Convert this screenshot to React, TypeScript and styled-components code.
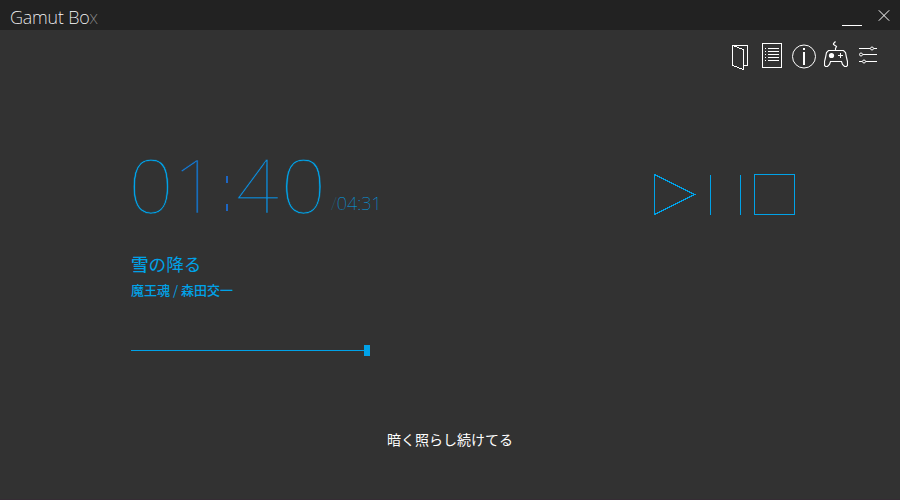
import React from "react";
import styled, { createGlobalStyle } from "styled-components";

const accent = "#00a2e8";

const Global = createGlobalStyle`
  * { box-sizing: border-box; }
  body { margin: 0; background: #323232; overflow: hidden; }
`;
const Window = styled.main`
  width: 900px;
  height: 500px;
  display: flex;
  flex-direction: column;
  background: #323232;
  border-bottom: 1px solid #352c34;
  font-family: "Noto Sans", "Noto Sans CJK JP", sans-serif;
  overflow: hidden;
`;
const TitleBar = styled.header`
  height: 30px;
  flex: none;
  display: flex;
  justify-content: space-between;
  background: #222;
`;
const Title = styled.h1`
  margin: 0;
  padding: 4px 0 0 10px;
  font: 200 18px/26px "Noto Sans", sans-serif;
  letter-spacing: -0.15px;
  color: #fff;
`;
const Faded = styled.span<{ $tone: string }>`
  color: ${(p) => p.$tone};
`;
const WindowButtons = styled.div`
  display: flex;
  gap: 15px;
  padding-right: 10px;
  color: #fff;
`;
const Button = styled.button`
  display: block;
  border: 0;
  padding: 0;
  background: none;
  color: inherit;
`;
const Toolbar = styled.nav`
  height: 32px;
  margin-top: 10px;
  flex: none;
  display: flex;
  justify-content: flex-end;
  gap: 8px;
  padding-right: 20px;
  color: #fff;
`;
const Drawing = styled.svg`
  display: block;
  fill: none;
  stroke: currentColor;
  shape-rendering: crispEdges;
`;
const Player = styled.section`
  height: 170px;
  flex: none;
  display: flex;
  justify-content: space-between;
  padding: 70px 104px 0 128px;
  color: ${accent};
`;
const Times = styled.div`
  display: flex;
`;
const Elapsed = styled.div`
  display: flex;
  font: 100 75px/90px "Noto Sans", sans-serif;
  -webkit-text-stroke: 0.6px #323232;
`;
const Digit = styled.span<{ $width: number; $stretch?: number; $tone?: string }>`
  width: ${(p) => p.$width}px;
  display: flex;
  justify-content: center;
  color: ${(p) => p.$tone ?? "inherit"};
  transform: translateY(-3px) scaleX(${(p) => p.$stretch ?? 1.06});
`;
const Colon = styled.span`
  width: 16px;
  display: flex;
  justify-content: center;
  color: transparent;
  -webkit-text-stroke: 0;
  background:
    linear-gradient(#1c66c4, #1c66c4) 9px 34px / 2px 7px no-repeat,
    linear-gradient(#1c66c4, #1c66c4) 9px 62px / 2px 7px no-repeat;
`;
const Total = styled.div`
  padding-top: 49px;
  margin-left: 6px;
  font: 100 18px/24px "Noto Sans", sans-serif;
`;
const Controls = styled.div`
  display: flex;
  align-items: flex-start;
  padding-top: 32px;
`;
const Track = styled.section`
  height: 93px;
  flex: none;
  padding: 7px 0 0 131px;
  color: ${accent};
`;
const Song = styled.h2`
  margin: 0;
  font: 400 17.6px/30px "Noto Sans CJK JP", sans-serif;
`;
const Artist = styled.p`
  margin: 0;
  font: 400 13px/22px "Noto Sans CJK JP", sans-serif;
`;
const Heavy = styled.span`
  font-weight: 500;
`;
const Seek = styled.div`
  width: 239px;
  height: 11px;
  margin: 10px 0 0 131px;
  flex: none;
  display: flex;
  align-items: center;
`;
const Line = styled.div`
  height: 1px;
  flex: 1;
  background: ${accent};
`;
const Thumb = styled.div`
  width: 6px;
  height: 11px;
  background: ${accent};
`;
const Lyric = styled.p`
  margin: 72px 0 0;
  text-align: center;
  color: #fff;
  font: 400 14px/22px "Noto Sans CJK JP", sans-serif;
`;

function Icon({ w, h, children }: { w: number; h: number; children: React.ReactNode }) {
  return <Drawing width={w} height={h} viewBox={`0 0 ${w} ${h}`}>{children}</Drawing>;
}

export default function App() {
  return (
    <Window>
      <Global />
      <TitleBar>
        <Title>Gamut Bo<Faded $tone="#888">x</Faded></Title>
        <WindowButtons>
          <Button aria-label="Minimize"><Icon w={21} h={30}><path d="M0 25.5H20" /></Icon></Button>
          <Button aria-label="Close">
            <Icon w={12} h={30}><path d="M.8 10.3 11.2 20.7M11.2 10.3 .8 20.7" strokeWidth="1" shapeRendering="geometricPrecision" /></Icon>
          </Button>
        </WindowButtons>
      </TitleBar>
      <Toolbar>
        <Button aria-label="Open">
          <Icon w={24} h={32}><path d="M4.5 5.5H19.5V25.5H15.5M4.5 5.5V25.5L15.5 29.5V9.5Z" /></Icon>
        </Button>
        <Button aria-label="Playlist">
          <Icon w={24} h={32}>
            <path d="M2.5 3.5H21.5V27.5H2.5Z" />
            <path d="M5 8.5H6M8 8.5H19M5 11.5H6M8 11.5H19M5 14.5H6M8 14.5H19M5 17.5H6M8 17.5H19M5 20.5H6M8 20.5H19" />
          </Icon>
        </Button>
        <Button aria-label="Information">
          <Icon w={24} h={32}>
            <circle cx="12" cy="16.5" r="11.5" shapeRendering="geometricPrecision" />
            <path d="M12 8V10M12 12V25" strokeWidth="2" />
          </Icon>
        </Button>
        <Button aria-label="Games">
          <Icon w={24} h={32}>
            <g shapeRendering="geometricPrecision">
              <path strokeWidth="1.15" d="M4.5 10.5H19.5L21.5 12.5 22.5 17.5 23.5 21.5V25.5L22.5 26.5H20.5L18.5 24.5 17.5 21.5H6.5L5.5 24.5 3.5 26.5H1.5L.5 25.5V21.5L1.5 17.5 2.5 12.5ZM11.5 10.5V8.5L12.5 6.5 9.5 4.5V3.5L11.5 1.5" />
              <circle cx="7.5" cy="15.5" r="2.6" fill="currentColor" stroke="none" />
            </g>
            <path d="M14 15.5H19M16.5 13V18" />
          </Icon>
        </Button>
        <Button aria-label="Settings">
          <Icon w={24} h={32}>
            <path d="M3 8.5H14M18 8.5H21M7 14.5H21M3 21.5H6M10 21.5H21" />
            <g shapeRendering="geometricPrecision">
              <circle cx="16" cy="8.5" r="1.5" />
              <circle cx="5" cy="14.5" r="1.5" />
              <circle cx="8" cy="21.5" r="1.5" />
            </g>
          </Icon>
        </Button>
      </Toolbar>
      <Player>
        <Times>
          <Elapsed>
            <Digit $width={46}>0</Digit>
            <Digit $width={43} $tone="#1478d2">1</Digit>
            <Colon>:</Colon>
            <Digit $width={49} $stretch={1} $tone="#0c8ede">4</Digit>
            <Digit $width={43}>0</Digit>
          </Elapsed>
          <Total><Faded $tone="#246079">/</Faded>04:31</Total>
        </Times>
        <Controls>
          <Button aria-label="Play"><Icon w={43} h={42}><path d="M1.5 .5V40.5L41.5 20.5Z" /></Icon></Button>
          <Button aria-label="Pause"><Icon w={57} h={42}><path d="M14.5 1V41M44.5 1V41" /></Icon></Button>
          <Button aria-label="Stop"><Icon w={43} h={42}><path d="M1.5 .5H41.5V40.5H1.5Z" /></Icon></Button>
        </Controls>
      </Player>
      <Track>
        <Song><Heavy>雪</Heavy>の降る</Song>
        <Artist><Heavy>魔王魂</Heavy> / <Heavy>森田交一</Heavy></Artist>
      </Track>
      <Seek><Line /><Thumb /></Seek>
      <Lyric>暗く照らし続けてる</Lyric>
    </Window>
  );
}
